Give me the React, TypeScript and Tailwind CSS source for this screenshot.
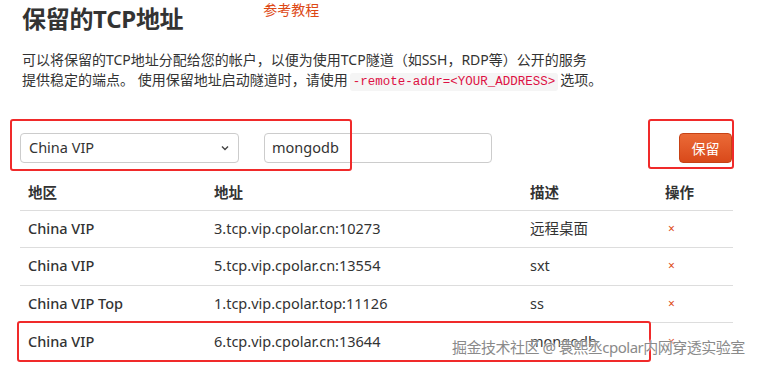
import React from 'react'

const rows = [
  { region: 'China VIP', addr: '3.tcp.vip.cpolar.cn:10273', desc: '远程桌面' },
  { region: 'China VIP', addr: '5.tcp.vip.cpolar.cn:13554', desc: 'sxt' },
  { region: 'China VIP Top', addr: '1.tcp.vip.cpolar.top:11126', desc: 'ss' },
  { region: 'China VIP', addr: '6.tcp.vip.cpolar.cn:13644', desc: 'mongodb' },
]

const font = { fontFamily: '"Noto Sans", "Noto Sans CJK SC", sans-serif' }

export default function App() {
  return (
    <div className="relative w-[758px] h-[367px] overflow-hidden bg-white text-[#333]" style={font}>
      <div className="pl-5 pr-[25px]">
        {/* Header */}
        <div className="flex items-start pt-[3px]">
          <h2 className="pl-[2px] text-[24px] leading-[32px] font-bold text-[#333] tracking-[-0.3px]">保留的TCP地址</h2>
          <a className="ml-[80px] -mt-[3px] text-[14px] leading-[20px] text-[#dd4814]">参考教程</a>
        </div>

        <p className="pl-[2px] mt-[15px] text-[14px] leading-[20px] text-[#333]">
          可以将保留的TCP地址分配给您的帐户，以便为使用TCP隧道（如SSH，RDP等）公开的服务
          <br />
          提供稳定的端点。 使用保留地址启动隧道时，请使用
          <code className="mx-[2px] px-[3px] py-[2px] rounded-[3px] bg-[#f5f5f5] text-[#dd1144] text-[12.5px] font-['Liberation_Mono',monospace]">
            -remote-addr=&lt;YOUR_ADDRESS&gt;
          </code>
          选项。
        </p>

        {/* Form */}
        <div className="flex items-center mt-[41px] h-[30px]">
          <div className="w-[219px] h-[30px] flex items-center justify-between px-[8px] border border-[#ccc] rounded-[4px] bg-white text-[14.5px]">
            <span>China VIP</span>
            <svg width="10" height="10" viewBox="0 0 10 10" className="text-[#444]">
              <path d="M2 3.5 L5 6.5 L8 3.5" fill="none" stroke="currentColor" strokeWidth="1.4" />
            </svg>
          </div>
          <div className="ml-[25px] w-[228px] h-[30px] flex items-center px-[7px] border border-[#ccc] rounded-[4px] bg-white text-[14.5px]">
            mongodb
          </div>
          <button className="ml-auto mr-[1px] w-[53px] h-[30px] rounded-[4px] text-white text-[14px] bg-gradient-to-b from-[#eb6a36] to-[#d9491a] border border-[#c74215]">
            保留
          </button>
        </div>

        {/* Table */}
        <table className="mt-[13px] w-[713px] text-[14.5px] border-collapse">
          <thead>
            <tr className="border-b border-[#ddd]">
              <th className="w-[186px] h-[34px] px-2 text-left font-bold">地区</th>
              <th className="w-[316px] px-2 text-left font-bold">地址</th>
              <th className="w-[135px] px-2 text-left font-bold">描述</th>
              <th className="px-2 text-left font-bold">操作</th>
            </tr>
          </thead>
          <tbody>
            {rows.map((r, i) => (
              <tr key={i} className="border-b border-[#ddd] last:border-b-0 h-[37.5px]">
                <td className="px-2 font-medium">{r.region}</td>
                <td className="px-2">{r.addr}</td>
                <td className="px-2">{r.desc}</td>
                <td className="px-2 pl-[11px] text-[#dd4814] text-[12px]">×</td>
              </tr>
            ))}
          </tbody>
        </table>
      </div>

      {/* annotation boxes */}
      <div className="absolute left-[10px] top-[119px] w-[342px] h-[52px] border-2 border-[#f02a2a] rounded-[3px]" />
      <div className="absolute left-[648px] top-[119px] w-[86px] h-[50px] border-2 border-[#f02a2a] rounded-[3px]" />
      <div className="absolute left-[17px] top-[321px] w-[634px] h-[41px] border-2 border-[#f02a2a] rounded-[3px]" />

      {/* watermark */}
      <div
        className="absolute left-[452px] top-[337px] text-[15px] leading-[20px] tracking-[-0.5px] text-[#8a8a8a] whitespace-nowrap"
        style={{ textShadow: '0 0 2px #fff, 0 0 2px #fff' }}
      >
        掘金技术社区 @ 袁熙丞cpolar内网穿透实验室
      </div>
    </div>
  )
}
